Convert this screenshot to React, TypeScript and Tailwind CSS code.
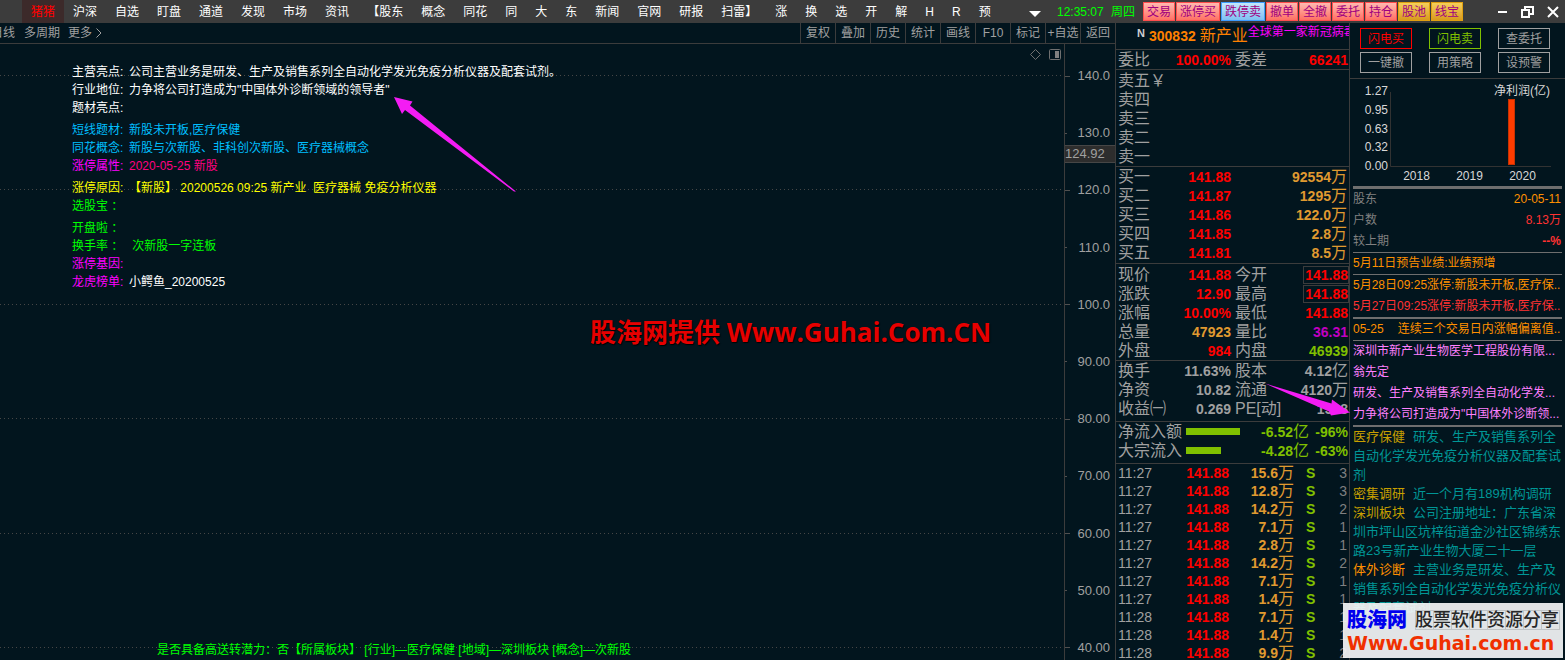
import type { ReactNode } from "react";
import clsx from "clsx";

const MENU = [
  "沪深", "自选", "盯盘", "通道", "发现", "市场", "资讯", "【股东", "概念", "同花", "同", "大", "东",
  "新闻", "官网", "研报", "扫雷】", "涨", "换", "选", "开", "解", "H", "R", "预",
];

const pinkButton = "border-[#ff4d4d] from-[#ffb9b0] to-[#ff6f63] w-8";
const goldButton = "border-[#e0a010] from-[#f5cf5a] to-[#d99a1c] w-8";

const TRADE_BUTTONS = [
  { label: "交易", style: pinkButton },
  { label: "涨停买", style: "border-[#ff4d4d] from-[#ffb9b0] to-[#ff6f63] w-11" },
  { label: "跌停卖", style: "border-[#3d9cff] from-[#c4e8fb] to-[#7fc0f2] w-11" },
  { label: "撤单", style: pinkButton },
  { label: "全撤", style: pinkButton },
  { label: "委托", style: pinkButton },
  { label: "持仓", style: pinkButton },
  { label: "股池", style: goldButton },
  { label: "线宝", style: goldButton },
];

const CHART_TOOLS = ["复权", "叠加", "历史", "统计", "画线", "F10", "标记", "+自选", "返回"];

const PRICES = [
  "140.0", "130.0", "120.0", "110.0", "100.0", "90.00", "80.00", "70.00", "60.00", "50.00", "40.00",
];

interface Note {
  label: string;
  text?: string;
  color: string;
  textColor?: string;
}

const NOTE_GROUPS: Note[][] = [
  [
    { label: "主营亮点:", text: "公司主营业务是研发、生产及销售系列全自动化学发光免疫分析仪器及配套试剂。", color: "text-white" },
    { label: "行业地位:", text: "力争将公司打造成为\"中国体外诊断领域的领导者\"", color: "text-white" },
    { label: "题材亮点:", color: "text-white" },
  ],
  [
    { label: "短线题材:", text: "新股未开板,医疗保健", color: "text-[#00bfff]" },
    { label: "同花概念:", text: "新股与次新股、非科创次新股、医疗器械概念", color: "text-[#00bfff]" },
    { label: "涨停属性:", text: "2020-05-25 新股", color: "text-[#ff00ff]", textColor: "text-[#ff0080]" },
  ],
  [
    { label: "涨停原因:", text: "【新股】 20200526 09:25 新产业\u00a0 医疗器械 免疫分析仪器", color: "text-[#ffff00]" },
    { label: "选股宝 ：", color: "text-[#00ff00]" },
  ],
  [
    { label: "开盘啦 ：", color: "text-[#00ff00]" },
    { label: "换手率 ：", text: "\u00a0次新股一字连板", color: "text-[#00ff00]" },
    { label: "涨停基因:", color: "text-[#ff00ff]" },
    { label: "龙虎榜单:", text: "小鳄鱼_20200525", color: "text-[#ff00ff]", textColor: "text-white" },
  ],
];

const BIDS = [
  { label: "买一", price: "141.88", volume: "92554" },
  { label: "买二", price: "141.87", volume: "1295" },
  { label: "买三", price: "141.86", volume: "122.0" },
  { label: "买四", price: "141.85", volume: "2.8" },
  { label: "买五", price: "141.81", volume: "8.5" },
];

const RED = "text-[#ff0000]";
const AMBER = "text-[#e09a30]";
const GREEN = "text-[#80c000]";
const GRAY = "text-[#a0a0a0]";

interface Pair {
  a: string;
  av: string;
  ac: string;
  b: string;
  bv: string;
  bc: string;
  unit?: string;
  boxed?: boolean;
}

const QUOTE: Pair[] = [
  { a: "现价", av: "141.88", ac: RED, b: "今开", bv: "141.88", bc: RED, boxed: true },
  { a: "涨跌", av: "12.90", ac: RED, b: "最高", bv: "141.88", bc: RED, boxed: true },
  { a: "涨幅", av: "10.00%", ac: RED, b: "最低", bv: "141.88", bc: RED },
  { a: "总量", av: "47923", ac: AMBER, b: "量比", bv: "36.31", bc: "text-[#c000c0]" },
  { a: "外盘", av: "984", ac: RED, b: "内盘", bv: "46939", bc: GREEN },
];

const CAPITAL: Pair[] = [
  { a: "换手", av: "11.63%", ac: GRAY, b: "股本", bv: "4.12", bc: GRAY, unit: "亿" },
  { a: "净资", av: "10.82", ac: GRAY, b: "流通", bv: "4120", bc: GRAY, unit: "万" },
  { a: "收益㈠", av: "0.269", ac: GRAY, b: "PE[动]", bv: "1318", bc: GRAY },
];

const FLOWS = [
  { label: "净流入额", bar: 54, value: "-6.52", pct: "-96%" },
  { label: "大宗流入", bar: 35, value: "-4.28", pct: "-63%" },
];

const TICKS = [
  ["11:27", "15.6", "3"],
  ["11:27", "12.8", "3"],
  ["11:27", "14.2", "2"],
  ["11:27", "7.1", "1"],
  ["11:27", "2.8", "1"],
  ["11:27", "14.2", "2"],
  ["11:27", "7.1", "1"],
  ["11:27", "1.4", "1"],
  ["11:28", "7.1", "1"],
  ["11:28", "1.4", "1"],
  ["11:28", "9.9", "2"],
];

const ACTIONS = [
  { label: "闪电买", style: "border-[#ff0000] text-[#ff0000]" },
  { label: "闪电卖", style: "border-[#80c000] text-[#80c000]" },
  { label: "查委托", style: "border-[#a0a0a0] text-[#a0a0a0]" },
  { label: "一键撤", style: "border-[#a0a0a0] text-[#a0a0a0]" },
  { label: "用策略", style: "border-[#a0a0a0] text-[#a0a0a0]" },
  { label: "设预警", style: "border-[#a0a0a0] text-[#a0a0a0]" },
];

const TOPICS = [
  { tag: "医疗保健", color: "text-[#c8a000]", text: "研发、生产及销售系列全自动化学发光免疫分析仪器及配套试剂" },
  { tag: "密集调研", color: "text-[#c8a000]", text: "近一个月有189机构调研" },
  { tag: "深圳板块", color: "text-[#c8a000]", text: "公司注册地址：广东省深圳市坪山区坑梓街道金沙社区锦绣东路23号新产业生物大厦二十一层" },
  { tag: "体外诊断", color: "text-[#ff9000]", text: "主营业务是研发、生产及销售系列全自动化学发光免疫分析仪器及配套试剂" },
];

function Unit({ children }: { children: ReactNode }) {
  return <span className="text-base leading-4 font-normal">{children}</span>;
}

function TopBar() {
  return (
    <header className="flex h-[23px] shrink-0 items-center bg-[#3c3c3c] text-xs text-white">
      <nav className="flex h-full pl-[22px]">
        <button type="button" className="bg-[#3c2a2a] px-[9px] text-[#ff0000]">
          猪猪
        </button>
        {MENU.map((item) => (
          <button key={item} type="button" className="px-[9px]">
            {item}
          </button>
        ))}
      </nav>
      <div className="ml-auto flex items-center">
        <button type="button" aria-label="更多菜单" className="mr-4">
          <svg width="12" height="6" viewBox="0 0 12 6" className="mt-1">
            <path d="M0 0h12L6 6z" fill="#fff" />
          </svg>
        </button>
        <span className="w-[54px] text-[#00ff00]">12:35:07</span>
        <span className="w-8 text-[#00ff00]">周四</span>
        <div className="flex gap-px">
          {TRADE_BUTTONS.map(({ label, style }) => (
            <button
              key={label}
              type="button"
              className={clsx("h-[19px] border bg-linear-to-b leading-4 text-[#a00080]", style)}
            >
              {label}
            </button>
          ))}
        </div>
        <div className="ml-[35px] flex items-center gap-[13px] pr-1.5">
          <button type="button" aria-label="最小化">
            <svg width="10" height="12" viewBox="0 0 10 12">
              <path d="M0 6h9" stroke="#fff" strokeWidth="2" />
            </svg>
          </button>
          <button type="button" aria-label="还原">
            <svg width="13" height="12" viewBox="0 0 13 12" fill="none" stroke="#fff" strokeWidth="2">
              <path d="M4 4V1h8v7H9" />
              <path d="M1 4h7v7H1z" />
            </svg>
          </button>
          <button type="button" aria-label="关闭">
            <svg width="12" height="12" viewBox="0 0 12 12">
              <path d="M1 1l10 10M11 1L1 11" stroke="#fff" strokeWidth="2" />
            </svg>
          </button>
        </div>
      </div>
    </header>
  );
}

function ChartToolbar() {
  return (
    <div className="flex h-[21px] shrink-0 justify-between border-b border-[#3c3c3c] text-xs text-[#a0a0a0]">
      <div className="-ml-[9px] flex items-center">
        <button type="button">日线</button>
        <button type="button" className="ml-[9px]">多周期</button>
        <button type="button" className="ml-2 flex items-center gap-1">
          更多
          <svg width="6" height="10" viewBox="0 0 6 10" fill="none" stroke="#a0a0a0">
            <path d="M.5 .5L5 5L.5 9.5" />
          </svg>
        </button>
      </div>
      <div className="flex">
        {CHART_TOOLS.map((tool) => (
          <button key={tool} type="button" className="w-[35px] border-l border-[#3c3c3c] whitespace-nowrap">
            {tool}
          </button>
        ))}
      </div>
    </div>
  );
}

function ChartPane() {
  return (
    <section className="flex min-w-0 flex-1 flex-col">
      <ChartToolbar />
      <div className="flex min-h-0 flex-1">
        <div className="relative flex min-w-0 flex-1 flex-col">
          {/* dotted grid */}
          <div className="absolute inset-0 flex flex-col justify-between pt-[31px] pb-3">
            {[140, 120, 100, 80, 60, 40].map((p) => (
              <div
                key={p}
                className="h-px bg-[linear-gradient(90deg,#464646_1px,transparent_1px)] bg-[length:4px_1px]"
              />
            ))}
          </div>

          <div className="relative flex h-[18px] items-center justify-end gap-2 pt-0.5 pr-[3px]">
            <svg width="11" height="11" viewBox="0 0 11 11" fill="none" stroke="#707070">
              <path d="M5.5 .5L10.5 5.5L5.5 10.5L.5 5.5z" />
            </svg>
            <svg width="12" height="11" viewBox="0 0 12 11">
              <rect x=".5" y=".5" width="11" height="10" rx="1" fill="none" stroke="#707070" />
              <rect x="6" y="2" width="4" height="7" fill="#808080" />
            </svg>
          </div>

          <dl className="relative flex flex-col gap-1 pt-px pl-[72px] text-xs leading-[18px]">
            {NOTE_GROUPS.map((group, i) => (
              <div key={i}>
                {group.map(({ label, text, color, textColor }) => (
                  <div key={label} className={clsx("flex h-[18px] whitespace-nowrap", color)}>
                    <dt className="w-[57px]">{label}</dt>
                    <dd className={textColor}>{text}</dd>
                  </div>
                ))}
              </div>
            ))}
          </dl>

          <p className="relative mt-auto pb-px pl-[157px] text-xs leading-[18px] text-[#00ff00]">
            是否具备高送转潜力：否【所属板块】 [行业]—医疗保健 [地域]—深圳板块 [概念]—次新股
          </p>
        </div>

        <div className="relative flex w-[51px] flex-col justify-between border-l border-[#3c3c3c] pt-[22px] pb-0.5 text-[13px] leading-5 text-[#a0a0a0]">
          {PRICES.map((price, i) => (
            <div key={price} className="flex h-5 items-center justify-between pr-[5px]">
              <span className={clsx("h-px bg-[#505050]", i % 2 ? "w-0.5" : "w-[5px]")} />
              {price}
            </div>
          ))}
          <span className="absolute top-[101px] left-0 w-full border-y border-[#464646] bg-[#2d2d2d] text-[13px] leading-4">
            124.92
          </span>
        </div>
      </div>
    </section>
  );
}

function Group({ className, children }: { className?: string; children: ReactNode }) {
  return (
    <div className={clsx("border-b border-[#3c3c3c]", className)}>
      <table className="w-full table-fixed border-collapse leading-4">
        <tbody>{children}</tbody>
      </table>
    </div>
  );
}

function Label({ children, className }: { children: ReactNode; className?: string }) {
  return (
    <th scope="row" className={clsx("p-0 text-left text-base leading-4 font-normal whitespace-nowrap text-[#a0a0a0]", className)}>
      {children}
    </th>
  );
}

function PairRow({ a, av, ac, b, bv, bc, unit, boxed }: Pair) {
  return (
    <tr className="h-[19px]">
      <Label className="w-[50px] pl-0.5">{a}</Label>
      <td className={clsx("w-[65px] p-0 text-right font-bold", ac)}>{av}</td>
      <Label className="w-[50px] pl-1">{b}</Label>
      <td className={clsx("p-0 text-right font-bold whitespace-nowrap", bc)}>
        <span className={clsx(boxed ? "inline-block border border-[#3c3c3c] pl-px" : "pr-px")}>
          {bv}
          {unit && <Unit>{unit}</Unit>}
        </span>
      </td>
    </tr>
  );
}

function QuotePane() {
  return (
    <section className="w-[235px] shrink-0 overflow-hidden border-x border-[#3c3c3c] text-sm leading-4">
      <div className="flex h-[27px] overflow-hidden border-b border-[#3c3c3c] pl-[21px] whitespace-nowrap">
        <span className="w-3 shrink-0 text-[11px] leading-5 font-bold text-[#d0d0d0]">N</span>
        <h1 className="flex shrink-0 items-center gap-1 text-[#ff8000]">
          <span className="font-bold">300832</span>
          <span className="text-base">新产业</span>
        </h1>
        <span className="text-xs leading-[18px] text-[#ff00ff]">全球第一家新冠病毒</span>
      </div>

      <Group>
        <PairRow a="委比" av="100.00%" ac={RED} b="委差" bv="66241" bc={RED} />
      </Group>

      <Group className="pt-px">
        {["卖五￥", "卖四", "卖三", "卖二", "卖一"].map((label) => (
          <tr key={label} className="h-[19px]">
            <Label className="pl-0.5">{label}</Label>
          </tr>
        ))}
      </Group>

      <Group className="pb-px">
        {BIDS.map(({ label, price, volume }) => (
          <tr key={label} className="h-[19px]">
            <Label className="w-[50px] pl-0.5">{label}</Label>
            <td className="w-[65px] p-0 text-right font-bold text-[#ff0000]">{price}</td>
            <td className="p-0 pr-0.5 text-right font-bold text-[#e09a30]">
              {volume}
              <Unit>万</Unit>
            </td>
          </tr>
        ))}
      </Group>

      <Group className="pt-px">
        {QUOTE.map((row) => (
          <PairRow key={row.a} {...row} />
        ))}
      </Group>

      <Group className="pb-[3px]">
        {CAPITAL.map((row) => (
          <PairRow key={row.a} {...row} />
        ))}
      </Group>

      <Group className="pb-[3px]">
        {FLOWS.map(({ label, bar, value, pct }) => (
          <tr key={label} className="h-[19px]">
            <Label className="w-[70px] pl-0.5">{label}</Label>
            <td className="p-0">
              <div className="h-[7px] bg-[#80c000]" style={{ width: bar }} />
            </td>
            <td className="w-[65px] p-0 text-right font-bold whitespace-nowrap text-[#80c000]">
              {value}
              <Unit>亿</Unit>
            </td>
            <td className="w-10 p-0 pr-px text-right font-bold text-[#80c000]">{pct}</td>
          </tr>
        ))}
      </Group>

      <table className="w-full table-fixed border-collapse leading-4">
        <tbody>
          {TICKS.map(([time, amount, count], i) => (
            <tr key={i} className="h-[18px]">
              <td className="w-[50px] p-0 pl-0.5 text-[#a0a0a0]">{time}</td>
              <td className="w-[63px] p-0 text-right font-bold text-[#ff0000]">141.88</td>
              <td className="w-[65px] p-0 text-right font-bold whitespace-nowrap text-[#e09a30]">
                {amount}
                <Unit>万</Unit>
              </td>
              <td className="p-0 pl-3 font-bold text-[#80c000]">S</td>
              <td className="w-6 p-0 pr-0.5 text-right text-[#808080]">{count}</td>
            </tr>
          ))}
        </tbody>
      </table>
    </section>
  );
}

function ProfitChart() {
  return (
    <div className="relative h-[107px] pt-1 text-xs leading-4 text-[#d8d8d8]">
      <div className="flex">
        <div className="flex h-[91px] w-[38px] flex-col justify-between text-right">
          {["1.27", "0.95", "0.63", "0.32", "0.00"].map((v) => (
            <span key={v}>{v}</span>
          ))}
        </div>
        <svg width="163" height="86" viewBox="0 0 163 86" className="ml-0.5">
          <path d="M.5 9V83.5H161" fill="none" stroke="#323232" />
          <rect x="118.5" y="16.5" width="6" height="65" fill="#ff3c00" stroke="#c83200" />
        </svg>
      </div>
      <div className="-mt-1.5 flex pl-10 text-center">
        {["2018", "2019", "2020"].map((year) => (
          <span key={year} className="w-[53px]">
            {year}
          </span>
        ))}
      </div>
      <h2 className="absolute top-1 right-[15px]">净利润(亿)</h2>
    </div>
  );
}

function InfoPane() {
  return (
    <aside className="w-[215px] shrink-0 overflow-hidden text-xs">
      <div className="grid h-14 grid-cols-[52px_52px_52px] content-start gap-x-[17px] gap-y-[3px] border-b border-[#3c3c3c] pt-[5px] pl-2.5">
        {ACTIONS.map(({ label, style }) => (
          <button key={label} type="button" className={clsx("h-[21px] border leading-4", style)}>
            {label}
          </button>
        ))}
      </div>

      <ProfitChart />

      <div className="px-[3px] leading-[21px]">
        <dl className="border-t-[3px] border-b border-[#6e6e6e] text-[#808080]">
          <div className="flex justify-between">
            <dt>股东</dt>
            <dd className="pr-px text-[#ff9000]">20-05-11</dd>
          </div>
          <div className="flex justify-between">
            <dt>户数</dt>
            <dd className="pr-px text-[#ff3232]">8.13万</dd>
          </div>
          <div className="flex justify-between">
            <dt>较上期</dt>
            <dd className="pr-px font-bold text-[#ff3232]">--%</dd>
          </div>
        </dl>
        <p className="border-b border-[#6e6e6e] text-[#ff9000]">5月11日预告业绩:业绩预增</p>
        <div className="border-b-2 border-[#6e6e6e] whitespace-nowrap">
          <p className="text-[#ff9000]">5月28日09:25涨停:新股未开板,医疗保..</p>
          <p className="text-[#ff3232]">5月27日09:25涨停:新股未开板,医疗保..</p>
        </div>
        <p className="border-b border-[#6e6e6e] whitespace-nowrap text-[#ff9000]">
          05-25<span className="ml-3.5">连续三个交易日内涨幅偏离值..</span>
        </p>
        <div className="border-b-2 border-[#6e6e6e] whitespace-nowrap text-[#ff80ff]">
          <p>深圳市新产业生物医学工程股份有限...</p>
          <p>翁先定</p>
          <p>研发、生产及销售系列全自动化学发...</p>
          <p>力争将公司打造成为"中国体外诊断领...</p>
        </div>
        <div className="text-[13px] leading-[19px] text-[#009696]">
          {TOPICS.map(({ tag, color, text }) => (
            <p key={tag} className="break-all">
              <span className={clsx("mr-2", color)}>{tag}</span>
              {text}
            </p>
          ))}
        </div>
      </div>
    </aside>
  );
}

function SiteBadge() {
  return (
    <div className="absolute right-0.5 bottom-0.5 h-[55px] w-[220px] overflow-hidden bg-[#f4f6f7]/92 px-1 whitespace-nowrap">
      <div className="flex items-center gap-2 pt-1">
        <strong className="text-xl leading-[26px] font-black text-[#0000ee]">股海网</strong>
        <span className="flex border border-l-0 border-[#c0c4c6] bg-[linear-gradient(90deg,#c0c4c6_1px,transparent_1px)] bg-[length:18px_18px] text-lg leading-[18px] font-medium text-[#282828]">
          股票软件资源分享
        </span>
      </div>
      <a
        href="#guhai"
        className="block font-['DejaVu_Sans'] text-[19px] leading-5 font-bold text-[#f03000]"
      >
        Www.Guhai.com.cn
      </a>
    </div>
  );
}

export default function App() {
  return (
    <div className="relative flex h-screen flex-col overflow-hidden bg-[#02151e] font-['Liberation_Sans','Noto_Sans_CJK_SC',sans-serif]">
      <TopBar />
      <main className="flex min-h-0 flex-1">
        <ChartPane />
        <QuotePane />
        <InfoPane />
      </main>

      {/* pointer arrows */}
      <svg width="1565" height="660" viewBox="0 0 1565 660" className="pointer-events-none absolute top-0 left-0" fill="#f41cf4">
        <path d="M394 97L412.5 101.5L410 105.5L516 191.5L514 191.5L405 110L402 114z" />
        <path d="M1265 383.5L1331.500 403.5L1332 399.5L1350 412.5L1331 415.5L1329 411.5z" />
      </svg>

      <p className="pointer-events-none absolute top-[314px] left-[590px] font-['Open_Sans','Noto_Sans_CJK_SC',sans-serif] text-[26px] leading-9 font-bold whitespace-nowrap text-[#e60000] [text-shadow:1px_1px_1px_#000]">
        股海网提供 Www.Guhai.Com.CN
      </p>
      <SiteBadge />
    </div>
  );
}
